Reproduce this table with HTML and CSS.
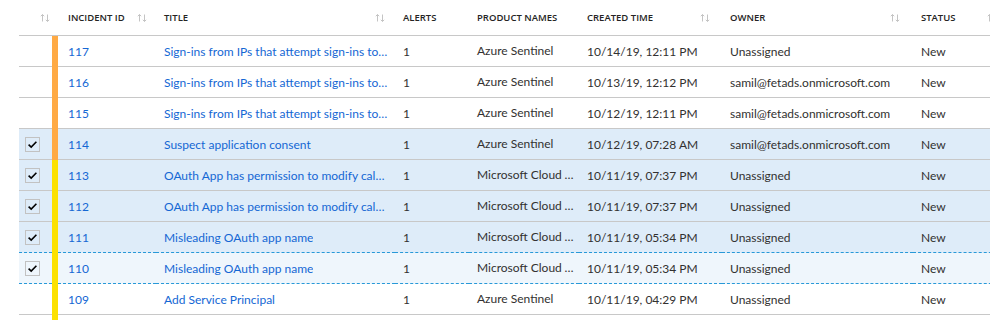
FILE: index.html
```html
<!DOCTYPE html>
<html lang="en">
  <head>
    <meta charset="utf-8" />
    <meta name="viewport" content="width=device-width, initial-scale=1" />
    <title>Incidents</title>
    <link rel="stylesheet" href="styles.css">
  </head>

  <body>
    <section class="incidents">
      <div class="incidents__head">
        <div class="th th--check"><span class="sort"></span></div>
        <div class="th th--sev"></div>
        <div class="th th--id"><span>Incident ID</span><span class="sort"></span></div>
        <div class="th th--title"><span>Title</span><span class="sort"></span></div>
        <div class="th"><span>Alerts</span></div>
        <div class="th"><span>Product names</span></div>
        <div class="th th--created"><span>Created time</span><span class="sort"></span></div>
        <div class="th th--owner"><span>Owner</span><span class="sort"></span></div>
        <div class="th th--status"><span>Status</span><span class="sort"></span></div>
      </div>
      <!-- rows get injected here -->
      <div id="incident-rows"></div>
    </section>

    <script>
      const ROWS = document.getElementById("incident-rows");

      const SORT_ICON = `
        <svg width="10" height="10" viewBox="0 0 10 10" fill="none" stroke="#c4c4c4" stroke-width="1">
          <path d="M2.5 1.5v7M0.8 3.2l1.7-1.7 1.7 1.7" />
          <path d="M7.5 1.5v7M5.8 6.8l1.7 1.7 1.7-1.7" />
        </svg>`;

      const CHECK = `
        <span class="checkbox">
          <svg width="13" height="13" viewBox="0 0 13 13" fill="none" stroke="#000" stroke-width="1.6">
            <path d="M2.6 6.6l2.6 2.5 5.2-5.4" />
          </svg>
        </span>`;

      const incidents = [
        { id: 117, title: "Sign-ins from IPs that attempt sign-ins to disabled accounts", product: "Azure Sentinel", created: "10/14/19, 12:11 PM", owner: "Unassigned", sev: "medium" },
        { id: 116, title: "Sign-ins from IPs that attempt sign-ins to disabled accounts", product: "Azure Sentinel", created: "10/13/19, 12:12 PM", owner: "samil@fetads.onmicrosoft.com", sev: "medium" },
        { id: 115, title: "Sign-ins from IPs that attempt sign-ins to disabled accounts", product: "Azure Sentinel", created: "10/12/19, 12:11 PM", owner: "samil@fetads.onmicrosoft.com", sev: "medium" },
        { id: 114, title: "Suspect application consent", product: "Azure Sentinel", created: "10/12/19, 07:28 AM", owner: "samil@fetads.onmicrosoft.com", sev: "medium", selected: true },
        { id: 113, title: "OAuth App has permission to modify calendar", product: "Microsoft Cloud App Security", created: "10/11/19, 07:37 PM", owner: "Unassigned", sev: "low", selected: true },
        { id: 112, title: "OAuth App has permission to modify calendar", product: "Microsoft Cloud App Security", created: "10/11/19, 07:37 PM", owner: "Unassigned", sev: "low", selected: true },
        { id: 111, title: "Misleading OAuth app name", product: "Microsoft Cloud App Security", created: "10/11/19, 05:34 PM", owner: "Unassigned", sev: "low", selected: true, beforeFocus: true },
        { id: 110, title: "Misleading OAuth app name", product: "Microsoft Cloud App Security", created: "10/11/19, 05:34 PM", owner: "Unassigned", sev: "low", selected: true, focused: true },
        { id: 109, title: "Add Service Principal", product: "Azure Sentinel", created: "10/11/19, 04:29 PM", owner: "Unassigned", sev: "low" },
        { id: 108, title: "Add Service Principal", product: "Azure Sentinel", created: "10/11/19, 04:21 PM", owner: "Unassigned", sev: "low" }
      ];

      document.querySelectorAll(".sort").forEach(s => s.innerHTML = SORT_ICON);

      let HTML = ``;
      incidents.map(d => {
        let classes = "row";
        if (d.selected) classes += "  row--selected";
        if (d.focused) classes += "  row--focused";
        if (d.beforeFocus) classes += "  row--before-focus";

        return (
          HTML += `
            <div class="${classes}">
              <div class="td td--check">${ d.selected ? CHECK : "" }</div>
              <div class="td td--sev  sev--${d.sev}"></div>
              <div class="td td--id"><a href="#">${d.id}</a></div>
              <div class="td td--title"><a href="#">${d.title}</a></div>
              <div class="td">1</div>
              <div class="td td--product">${d.product}</div>
              <div class="td">${d.created}</div>
              <div class="td">${d.owner}</div>
              <div class="td">New</div>
            </div>`
        )
      });

      ROWS.innerHTML = HTML;
    </script>
  </body>
</html>
```

FILE: styles.css
```css
html,
body {
  overflow: hidden;
}

body {
  background: #ffffff;
  color: #323130;
  font-family: Lato, 'Open Sans', sans-serif;
  font-size: 12px;
  margin: 0;
}

a {
  color: #1467d4;
  text-decoration: none;
}

.incidents {
  margin-left: 19px;
}

.incidents__head,
.row {
  display: grid;
  grid-template-columns: 33px 6px 98px 239px 74px 110px 143px 191px 94px;
}

.incidents__head {
  height: 35px;
  border-bottom: 1px solid #c8c8c8;
}

.th {
  display: flex;
  align-items: center;
  justify-content: space-between;
  padding-left: 8px;
  padding-right: 10px;
  color: #252423;
  font-family: 'Open Sans', sans-serif;
  font-size: 9.5px;
  font-weight: 600;
  text-transform: uppercase;
  white-space: nowrap;
}

.th--check {
  justify-content: flex-end;
  padding-right: 2px;
}

.th--sev {
  padding: 0;
}

.th--id {
  padding-left: 10px;
  padding-right: 9px;
}

.th--created {
  padding-right: 12px;
}

.th--owner {
  padding-right: 13px;
}

.sort {
  display: block;
  width: 10px;
  height: 10px;
  line-height: 0;
}

.row {
  height: 31px;
}

.td {
  display: flex;
  align-items: center;
  padding-left: 8px;
  border-bottom: 1px solid #c8c8c8;
  white-space: nowrap;
  overflow: hidden;
}

.td--check {
  padding-left: 6px;
}

.td--sev {
  padding: 0;
  border-bottom: none;
}

.td--id {
  padding-left: 10px;
}

.td--title a,
.td--product {
  overflow: hidden;
  text-overflow: ellipsis;
}

.td--title {
  padding-right: 5px;
}

.td--product {
  display: block;
  line-height: 30px;
  padding-right: 2px;
}

.sev--medium {
  background: #ffaa44;
}

.sev--low {
  background: #fce100;
}

.row--selected {
  background: #deecf9;
}

.row--focused {
  background: #eff6fc;
}

.row--focused .td,
.row--before-focus .td {
  border-bottom: 1px dashed #2899d8;
}

.row--focused .td--sev,
.row--before-focus .td--sev {
  border-bottom: none;
}

.checkbox {
  display: flex;
  align-items: center;
  justify-content: center;
  width: 13px;
  height: 13px;
  border: 1px solid #c2c2c2;
}
```
